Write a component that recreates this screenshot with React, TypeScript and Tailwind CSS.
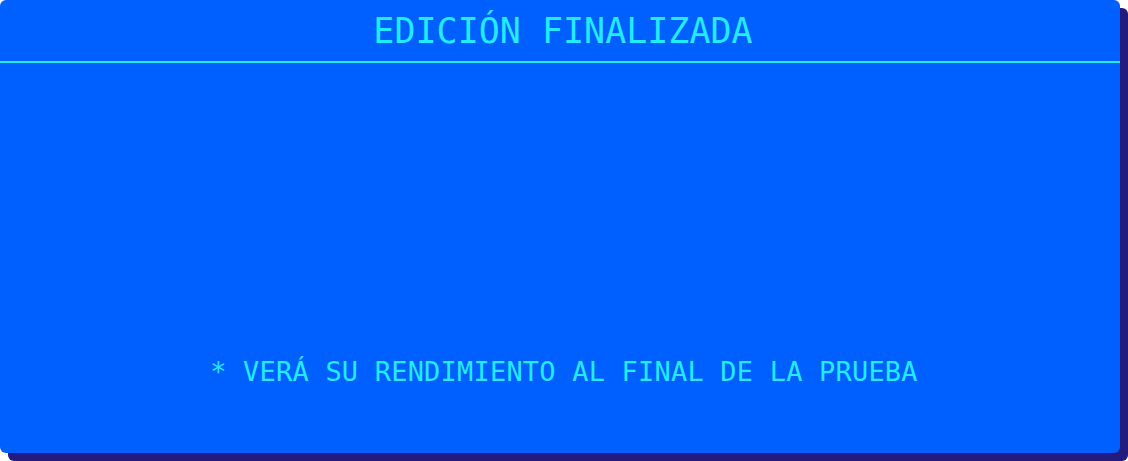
export default function App() {
  return (
    <div className="w-[1128px] h-[461px] bg-white" style={{ fontFamily: '"DejaVu Sans Mono", "Liberation Mono", monospace' }}>
      <div className="w-[1120px] h-[453px] bg-[#0060ff] rounded-[6px] shadow-[8px_8px_0_#231b7e] flex flex-col text-[#22eaff]">
        <div className="h-[63px] border-b-2 border-[#22eaff] flex items-center justify-center">
          <span className="text-[35px] leading-none pl-[6px] pt-[2px]">EDICIÓN FINALIZADA</span>
        </div>
        <div className="flex-1 flex flex-col justify-end items-center pb-[68px]">
          <span className="text-[27px] leading-none pl-[8px] tracking-[0.2px]">* VERÁ SU RENDIMIENTO AL FINAL DE LA PRUEBA</span>
        </div>
      </div>
    </div>
  );
}
